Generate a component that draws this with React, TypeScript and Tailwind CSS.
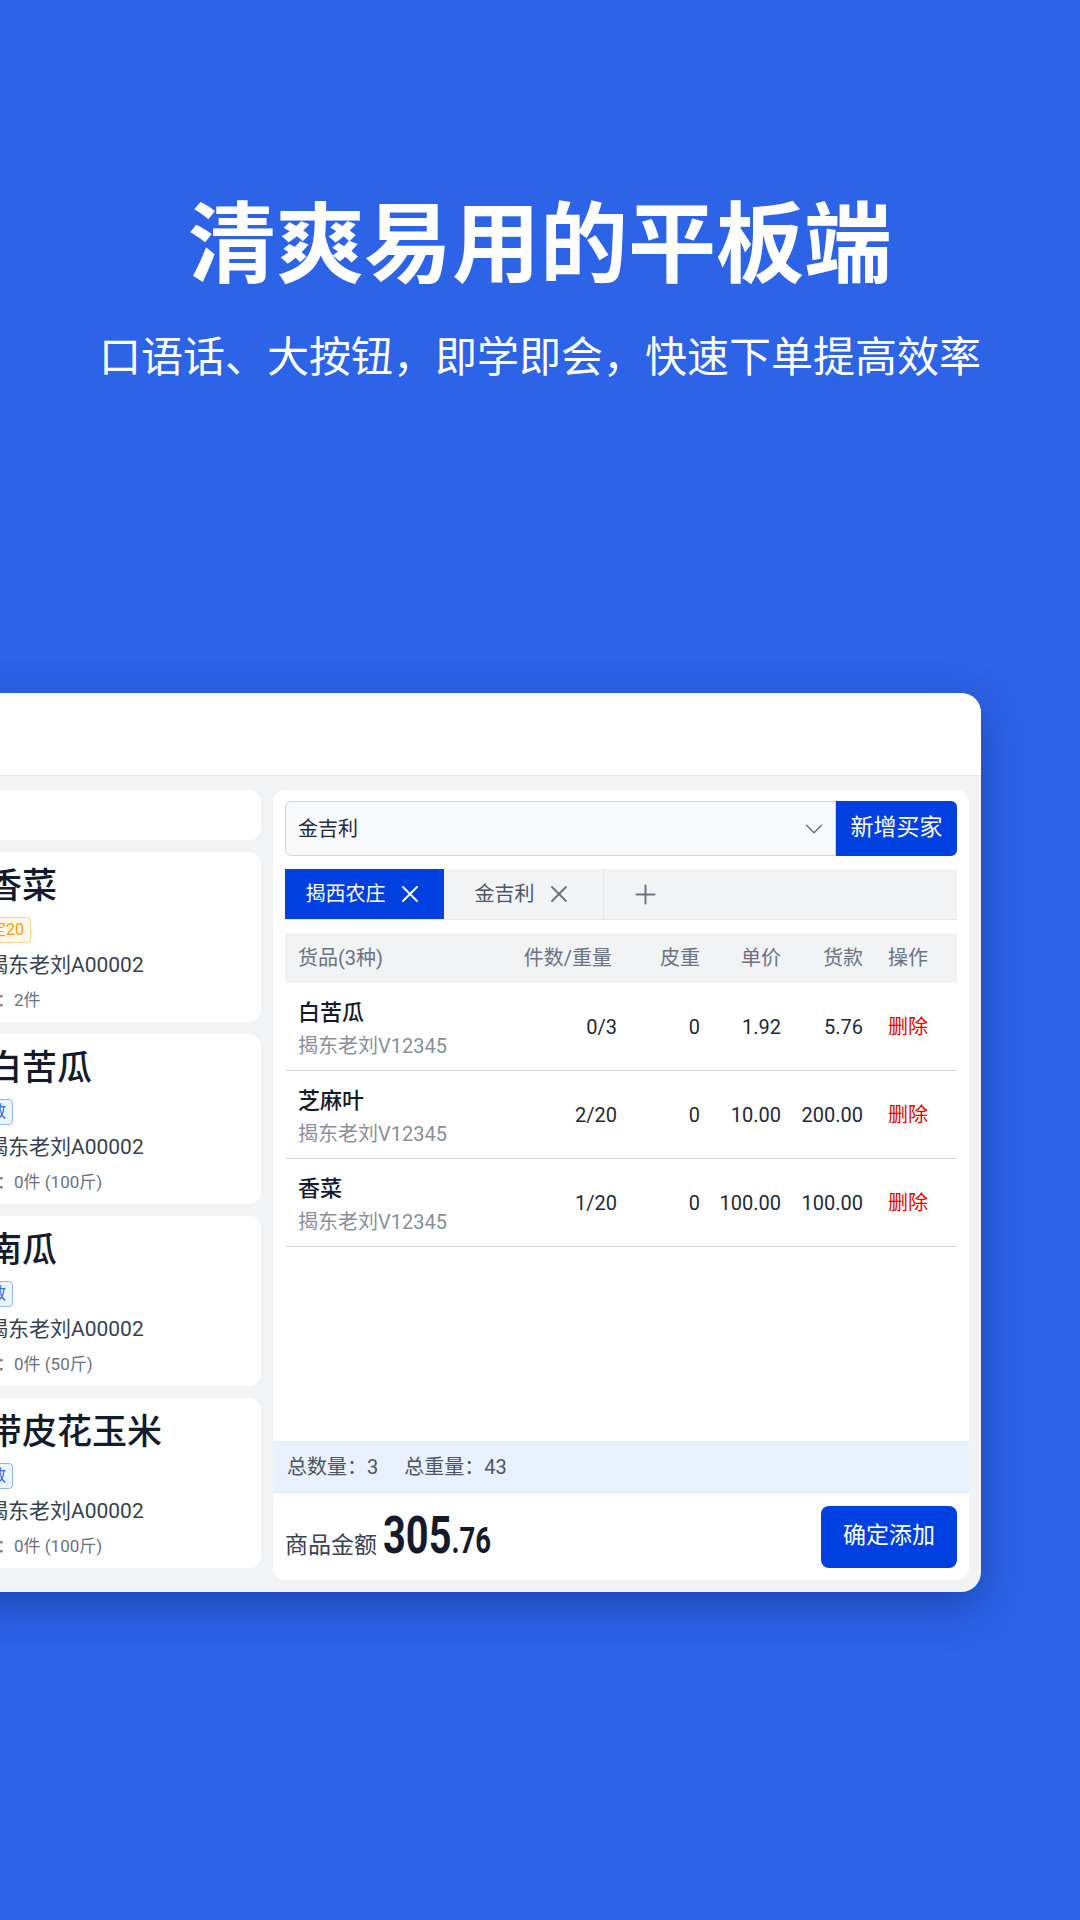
import { ChevronDown, X, Plus } from 'lucide-react';

const products = [
  { name: '香菜', tag: '定20', tone: 'orange', stock: '2件' },
  { name: '白苦瓜', tag: '散', tone: 'blue', stock: '0件 (100斤)' },
  { name: '南瓜', tag: '散', tone: 'blue', stock: '0件 (50斤)' },
  { name: '带皮花玉米', tag: '散', tone: 'blue', stock: '0件 (100斤)' },
];

const rows = [
  { name: '白苦瓜', seller: '揭东老刘V12345', qty: '0/3', tare: '0', price: '1.92', total: '5.76' },
  { name: '芝麻叶', seller: '揭东老刘V12345', qty: '2/20', tare: '0', price: '10.00', total: '200.00' },
  { name: '香菜', seller: '揭东老刘V12345', qty: '1/20', tare: '0', price: '100.00', total: '100.00' },
];

const grid = 'grid grid-cols-[1fr_110px_83px_81px_82px_94px]';

export default function App() {
  return (
    <div className="h-[1920px] w-[1080px] overflow-hidden bg-[#2c63e7] pt-[193px] font-['Roboto','Noto_Sans_CJK_SC',sans-serif]">
      <h1 className="text-center text-[88px] leading-none font-bold text-white font-['Noto_Sans_CJK_SC',sans-serif]">
        清爽易用的平板端
      </h1>
      <p className="mt-[52px] text-center text-[42px] leading-none text-white font-['Noto_Sans_CJK_SC',sans-serif]">
        口语话、大按钮，即学即会，快速下单提高效率
      </p>

      {/* 平板界面 */}
      <div className="mt-[318px] ml-[-40px] flex h-[899px] w-[1021px] flex-col overflow-hidden rounded-[20px] bg-[#f2f3f5] shadow-[0_14px_40px_rgba(0,20,90,0.35)]">
        <div className="h-[83px] shrink-0 border-b border-[#e5e7eb] bg-white" />

        <div className="flex flex-1 gap-3 pt-[14px] pr-3 pb-3 pl-3">
          {/* 左侧商品列表 */}
          <div className="flex w-[289px] shrink-0 flex-col gap-3 overflow-hidden">
            <div className="h-[50px] shrink-0 rounded-xl bg-white" />
            {products.map((p) => (
              <div key={p.name} className="h-[170px] shrink-0 rounded-xl bg-white pt-[14px] pl-[15px]">
                <div className="text-[35px] leading-[42px] font-medium text-[#141b2b]">{p.name}</div>
                {p.tone === 'orange' ? (
                  <div className="mt-[9px] ml-[-4px] flex h-[26px] w-fit items-center rounded-[4px] border border-[#ffd58a] bg-[#fff8e6] px-[6px] text-[16px] text-[#f59e0b]">
                    {p.tag}
                  </div>
                ) : (
                  <div className="mt-[9px] ml-[-4px] flex h-[26px] w-fit items-center rounded-[4px] border border-[#93b4f5] bg-[#eef4ff] px-[6px] text-[16px] text-[#2f6bf0]">
                    {p.tag}
                  </div>
                )}
                <div className="mt-[8px] text-[21px] leading-[29px] text-[#374151]">揭东老刘A00002</div>
                <div className="mt-[8px] ml-[-24px] text-[17px] leading-[24px] text-[#6b7280]">库存：{p.stock}</div>
              </div>
            ))}
          </div>

          {/* 右侧开单 */}
          <div className="flex flex-1 flex-col overflow-hidden rounded-xl bg-white">
            <div className="flex-1 px-3 pt-[11px]">
              <div className="flex h-[55px]">
                <div className="flex flex-1 items-center justify-between rounded-l-[6px] border border-[#d1d5db] bg-[#f8f9fb] pr-[6px] pl-[12px]">
                  <span className="text-[20px] text-[#1f2937]">金吉利</span>
                  <ChevronDown size={30} strokeWidth={1.2} className="text-[#6b7280]" />
                </div>
                <button className="w-[121px] rounded-r-[6px] bg-[#0040e0] text-[23px] text-white">新增买家</button>
              </div>

              <div className="mt-[13px] flex h-[51px] border-b border-[#e5e7eb] bg-[#f2f3f5]">
                <div className="flex w-[159px] items-center justify-center gap-[10px] bg-[#0040e0] text-[20px] text-white">
                  揭西农庄
                  <X size={28} strokeWidth={1.6} />
                </div>
                <div className="flex w-[160px] items-center justify-center gap-[10px] border-r border-[#e5e7eb] text-[20px] text-[#4b5563]">
                  金吉利
                  <X size={28} strokeWidth={1.6} className="text-[#6b7280]" />
                </div>
                <div className="flex w-[82px] items-center justify-center text-[#6b7280]">
                  <Plus size={31} strokeWidth={1.5} />
                </div>
              </div>

              <div className={`${grid} mt-[13px] h-[50px] items-center bg-[#f2f3f5] text-[20px] text-[#6b7280]`}>
                <div className="pl-[13px]">货品(3种)</div>
                <div className="pr-[5px] text-right">件数/重量</div>
                <div className="text-right">皮重</div>
                <div className="text-right">单价</div>
                <div className="text-right">货款</div>
                <div className="pl-[25px]">操作</div>
              </div>

              {rows.map((r) => (
                <div key={r.name} className={`${grid} h-[88px] items-center border-b border-[#d8dbe0] text-[20px] text-[#1f2937]`}>
                  <div className="pt-[4px] pl-[13px]">
                    <div className="text-[22px] leading-[30px] font-medium text-[#141b2b]">{r.name}</div>
                    <div className="mt-[4px] text-[20px] leading-[28px] text-[#8a8f99]">{r.seller}</div>
                  </div>
                  <div className="text-right">{r.qty}</div>
                  <div className="text-right">{r.tare}</div>
                  <div className="text-right">{r.price}</div>
                  <div className="text-right">{r.total}</div>
                  <div className="pl-[25px] text-[#e60000]">删除</div>
                </div>
              ))}
            </div>

            <div className="flex h-[52px] shrink-0 items-center gap-[26px] border-b border-[#e5e7eb] bg-[#e8f1fd] px-[14px] text-[20px] text-[#4b5563]">
              <span>总数量：3</span>
              <span>总重量：43</span>
            </div>

            <div className="flex h-[87px] shrink-0 items-center justify-between px-3">
              <div className="flex items-baseline">
                <span className="text-[23px] text-[#374151]">商品金额</span>
                {/* 窄体数字 */}
                <span className="ml-[6px] inline-block w-[104px] whitespace-nowrap">
                  <span className="inline-block origin-left scale-x-[0.765] font-bold text-[#141b2b]">
                    <span className="text-[52px] leading-none">305</span>
                    <span className="text-[36px] leading-none">.76</span>
                  </span>
                </span>
              </div>
              <button className="h-[62px] w-[136px] rounded-[8px] bg-[#0040e0] text-[23px] text-white">确定添加</button>
            </div>
          </div>
        </div>
      </div>
    </div>
  );
}
